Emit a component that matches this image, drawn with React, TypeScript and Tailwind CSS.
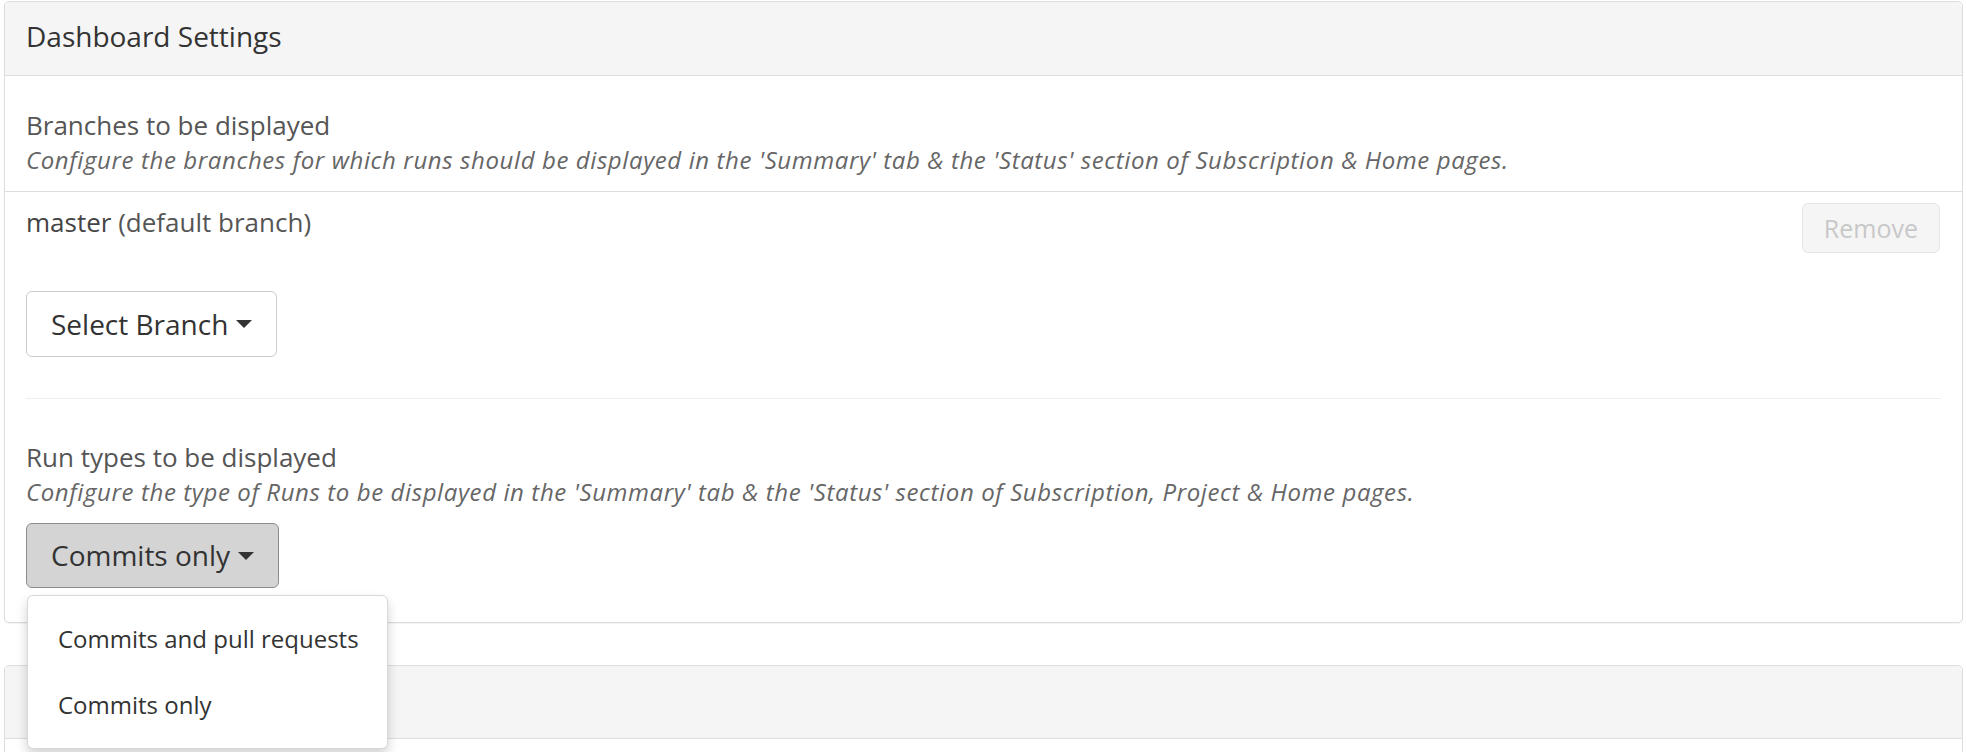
import { useState } from 'react'

const runTypes = ['Commits and pull requests', 'Commits only']

function Caret() {
  return <span className="ml-[8px] inline-block h-0 w-0 border-x-[8px] border-t-[8px] border-x-transparent border-t-[#333] align-middle" />
}

export default function App() {
  const [runType] = useState('Commits only')

  return (
    <div className="min-h-[752px] overflow-hidden bg-white pt-[1px] font-['Open_Sans','Liberation_Sans',sans-serif] text-[#333]">
      <div className="ml-[4px] mr-[3px]">
        <section className="rounded-[5px] border border-[#ddd] bg-white shadow-[0_1px_1px_rgba(0,0,0,0.05)]">
          <header className="rounded-t-[5px] border-b border-[#ddd] bg-[#f5f5f5] px-[21px] pt-[16px] pb-[20px]">
            <h3 className="text-[28px] leading-[37px] text-[#333]">Dashboard Settings</h3>
          </header>

          <div className="border-b border-[#ddd] px-[21px] pt-[30px] pb-[15px]">
            <h4 className="text-[26px] leading-[38px] text-[#555]">Branches to be displayed</h4>
            <p className="text-[24px] italic leading-[32px] tracking-[0.6px] text-[#666]">
              Configure the branches for which runs should be displayed in the 'Summary' tab &amp; the 'Status' section of Subscription &amp; Home pages.
            </p>
          </div>

          <div className="px-[21px] pt-[11px] pb-[34px]">
            <div className="flex items-start justify-between">
              <div className="mt-[2px] text-[26px] leading-[35px] text-[#555]">
                <span className="text-[#444]">master</span> (default branch)
              </div>
              <button
                disabled
                className="mr-[1px] h-[50px] rounded-[6px] border border-[#e6e6e6] bg-[#f5f5f5] px-[21px] text-[25px] leading-[48px] text-[#c8c8c8]"
              >
                Remove
              </button>
            </div>

            <button className="mt-[38px] flex h-[66px] items-center rounded-[6px] border border-[#ccc] bg-white px-[24px] text-[28px] leading-[38px] text-[#333]">
              Select Branch
              <Caret />
            </button>

            <div className="mt-[41px] border-t border-[#eee]" />

            <h4 className="mt-[39px] text-[26px] leading-[38px] text-[#555]">Run types to be displayed</h4>
            <p className="text-[24px] italic leading-[32px] tracking-[0.6px] text-[#666]">
              Configure the type of Runs to be displayed in the 'Summary' tab &amp; the 'Status' section of Subscription, Project &amp; Home pages.
            </p>

            <div className="relative mt-[15px] inline-block">
              <button className="flex h-[65px] items-center rounded-[6px] border border-[#8c8c8c] bg-[#d4d4d4] px-[24px] text-[28px] leading-[37px] text-[#333]">
                {runType}
                <Caret />
              </button>
              <ul className="absolute top-[calc(100%+7px)] left-[1px] z-10 w-[361px] rounded-[6px] border border-[rgba(0,0,0,0.15)] bg-white py-[10px] shadow-[0_6px_12px_rgba(0,0,0,0.175)]">
                {runTypes.map((item) => (
                  <li key={item} className="py-[16px] pl-[30px] text-[24px] leading-[34px] whitespace-nowrap text-[#333]">
                    {item}
                  </li>
                ))}
              </ul>
            </div>
          </div>
        </section>

        <section className="mt-[42px] rounded-[5px] border border-[#ddd] bg-white">
          <header className="rounded-t-[5px] border-b border-[#ddd] bg-[#f5f5f5] px-[21px] pt-[16px] pb-[19px]">
            <h3 className="text-[28px] leading-[37px] text-[#333]">Cleanup Settings</h3>
          </header>
          <div className="h-[120px]" />
        </section>
      </div>
    </div>
  )
}
